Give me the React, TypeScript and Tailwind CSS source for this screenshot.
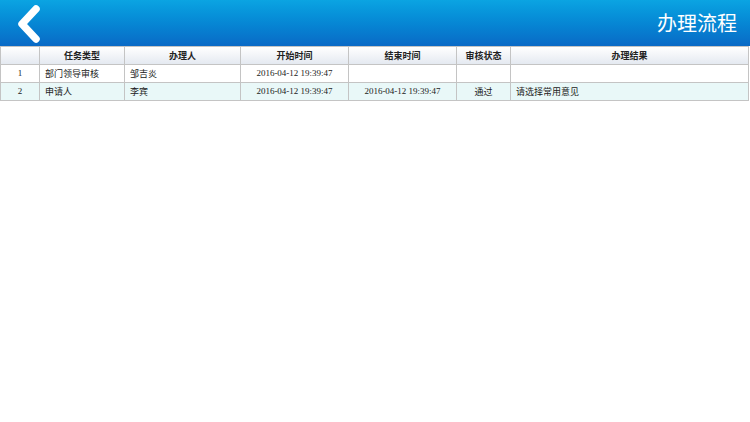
const cols = [
  { key: "idx", label: "", w: "w-[39px]" },
  { key: "type", label: "任务类型", w: "w-[85px]" },
  { key: "user", label: "办理人", w: "w-[116px]" },
  { key: "start", label: "开始时间", w: "w-[108px]" },
  { key: "end", label: "结束时间", w: "w-[108px]" },
  { key: "status", label: "审核状态", w: "w-[54px]" },
  { key: "result", label: "办理结果", w: "" },
];

const rows = [
  { idx: "1", type: "部门领导审核", user: "邹吉炎", start: "2016-04-12 19:39:47", end: "", status: "", result: "" },
  { idx: "2", type: "申请人", user: "李宾", start: "2016-04-12 19:39:47", end: "2016-04-12 19:39:47", status: "通过", result: "请选择常用意见" },
];

const sans = "font-['Noto_Sans_CJK_SC',sans-serif]";
const serif = "font-['Liberation_Serif','Noto_Sans_CJK_SC',serif]";

export default function App() {
  return (
    <div className="w-[750px] h-[422px] bg-white overflow-hidden">
      <header className="h-[46px] bg-gradient-to-b from-[#0ba4e2] to-[#0a6ac6] flex items-center justify-between pl-[14px] pr-[13px]">
        <svg width="30" height="40" viewBox="0 0 30 40" className="mt-[1px]">
          <path d="M22 5 L8 20 L22 35" fill="none" stroke="white" strokeWidth="7.5" strokeLinecap="round" strokeLinejoin="round" />
        </svg>
        <h1 className={`${sans} text-white text-[20px] leading-none font-normal`}>办理流程</h1>
      </header>
      <table className="w-[749px] border-collapse table-fixed text-[9px] text-[#222]">
        <thead>
          <tr className="h-[18px] bg-gradient-to-b from-[#ffffff] to-[#e3e8f0]">
            {cols.map((c) => (
              <th key={c.key} className={`${c.w} ${sans} border border-[#c4c4c4] font-bold text-center p-0`}>
                {c.label}
              </th>
            ))}
          </tr>
        </thead>
        <tbody>
          {rows.map((r, i) => (
            <tr key={r.idx} className={`h-[18px] ${i % 2 ? "bg-[#e9f8f8]" : "bg-white"}`}>
              <td className={`${serif} border border-[#c4c4c4] text-center p-0`}>{r.idx}</td>
              <td className={`${sans} border border-[#c4c4c4] pl-[5px] p-0`}>{r.type}</td>
              <td className={`${sans} border border-[#c4c4c4] pl-[5px] p-0`}>{r.user}</td>
              <td className={`${serif} border border-[#c4c4c4] text-center p-0`}>{r.start}</td>
              <td className={`${serif} border border-[#c4c4c4] text-center p-0`}>{r.end}</td>
              <td className={`${sans} border border-[#c4c4c4] text-center p-0`}>{r.status}</td>
              <td className={`${sans} border border-[#c4c4c4] pl-[5px] p-0`}>{r.result}</td>
            </tr>
          ))}
        </tbody>
      </table>
    </div>
  );
}
